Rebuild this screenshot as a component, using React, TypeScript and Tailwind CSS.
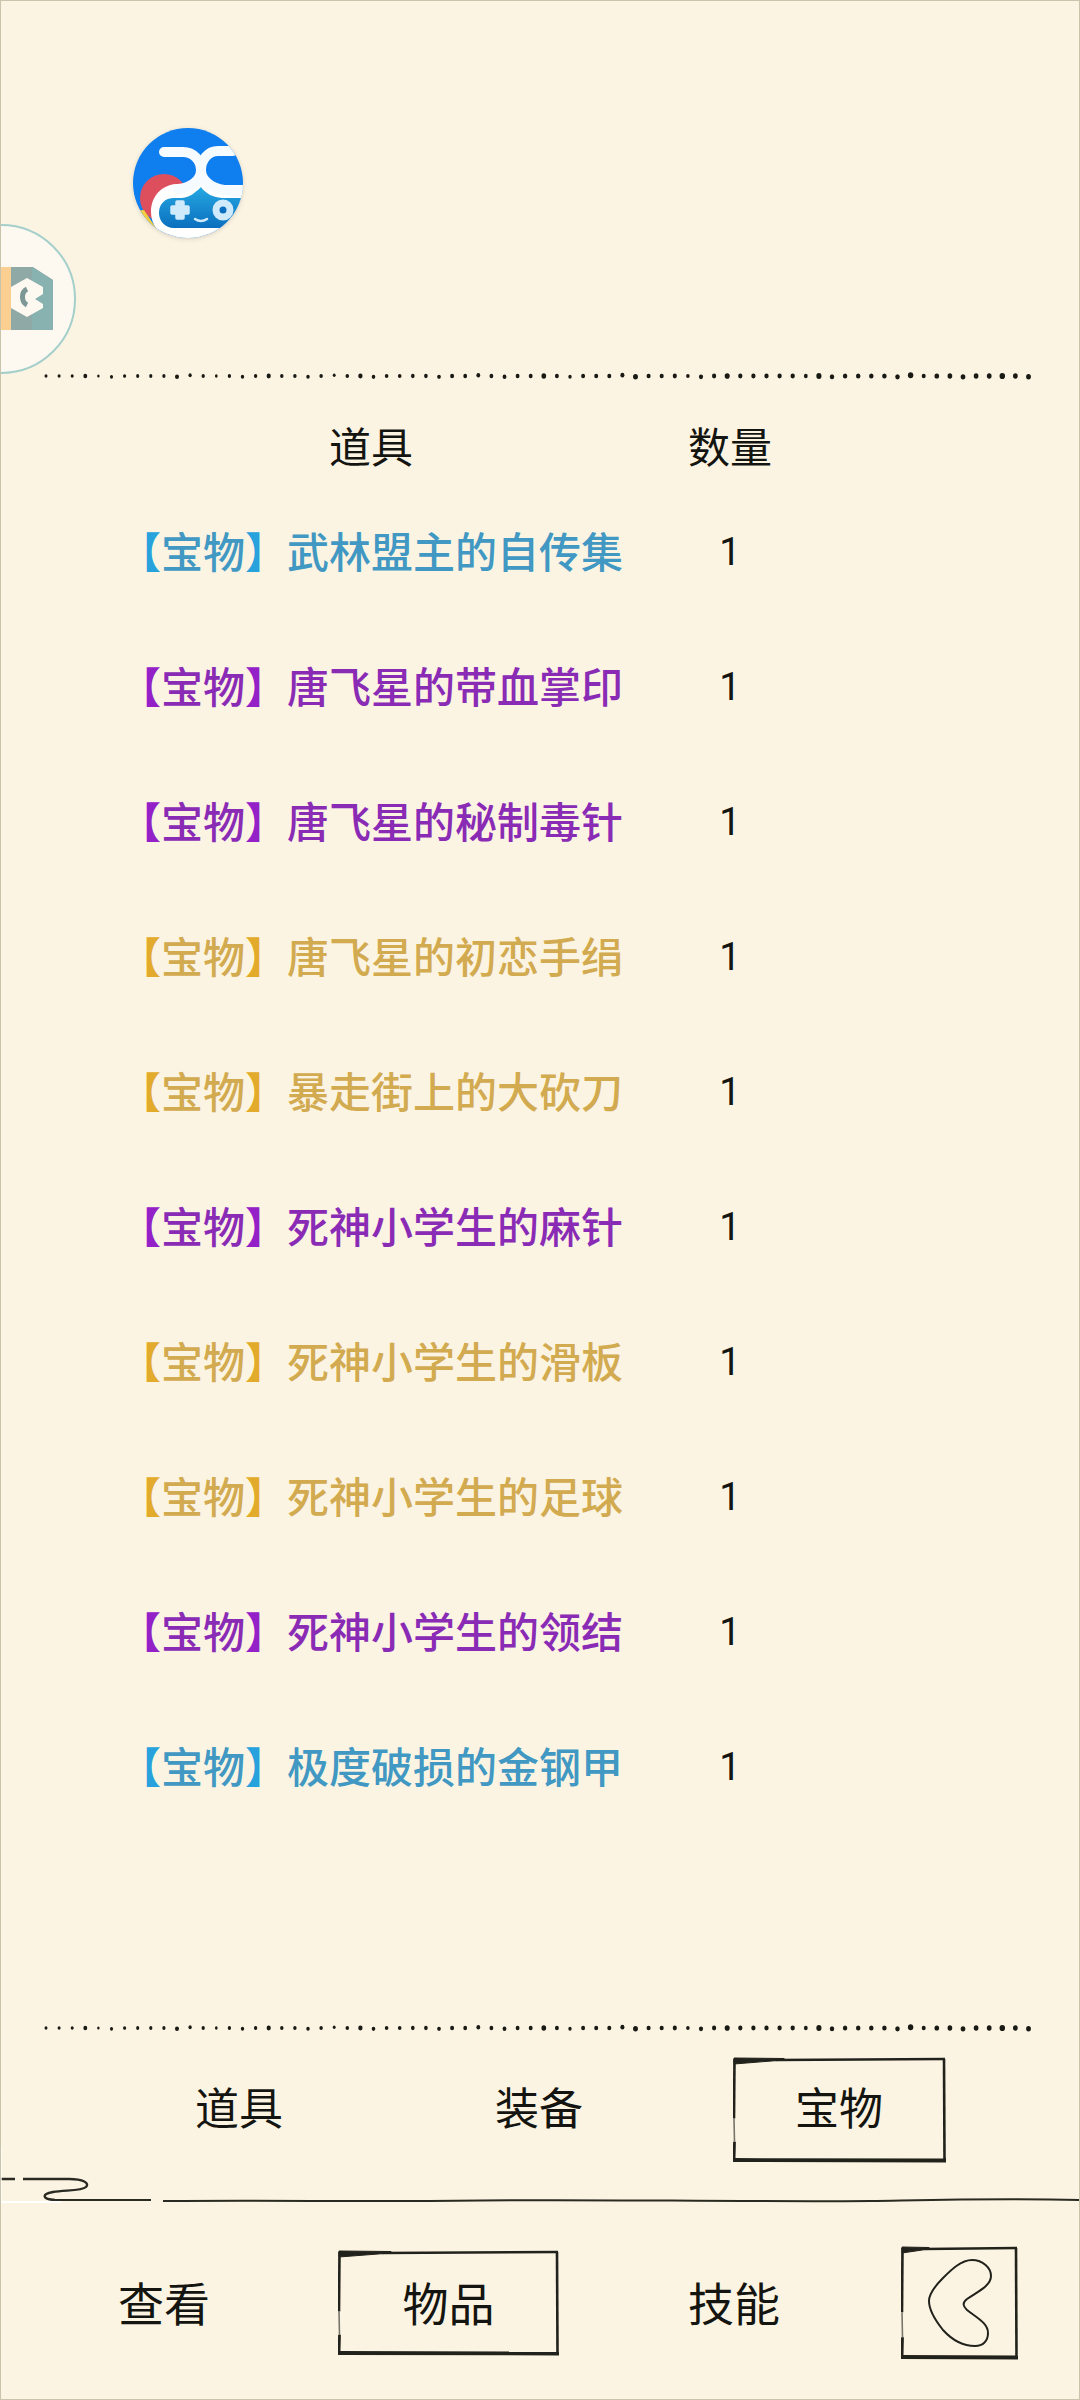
const FONT = "font-['Noto_Sans_CJK_SC','Noto_Sans_CJK_JP',sans-serif]";

const BLUE = { text: "text-[#4198c2]", bracket: "text-[#27a2dc]" };
const PURPLE = { text: "text-[#8a2bb5]", bracket: "text-[#9420c8]" };
const GOLD = { text: "text-[#d2aa50]", bracket: "text-[#e3ab2b]" };

const ITEMS = [
  { name: "武林盟主的自传集", tone: BLUE },
  { name: "唐飞星的带血掌印", tone: PURPLE },
  { name: "唐飞星的秘制毒针", tone: PURPLE },
  { name: "唐飞星的初恋手绢", tone: GOLD },
  { name: "暴走街上的大砍刀", tone: GOLD },
  { name: "死神小学生的麻针", tone: PURPLE },
  { name: "死神小学生的滑板", tone: GOLD },
  { name: "死神小学生的足球", tone: GOLD },
  { name: "死神小学生的领结", tone: PURPLE },
  { name: "极度破损的金钢甲", tone: BLUE },
];

function Dots() {
  const dots = Array.from({ length: 76 }, (_, i) => {
    const x = 3 + i * 13.1;
    const t = i / 75;
    const r = 1.5 + (i % 7 === 3 ? 0.4 : 0) - (i % 9 === 4 ? 0.3 : 0) + t * 0.9;
    const y = 5 + ((i * 7) % 5 === 0 ? 0.8 : 0) - (i % 11 === 0 ? 0.8 : 0);
    return { x, y, r };
  });
  return (
    <svg width="996" height="10" viewBox="0 0 996 10" className="ml-[42px] block">
      {dots.map((d) => (
        <ellipse key={d.x} cx={d.x} cy={d.y} rx={d.r} ry={d.r + 0.3} fill="#1a1a14" />
      ))}
    </svg>
  );
}

function SketchBox({ w, h, children }: { w: number; h: number; children: React.ReactNode }) {
  return (
    <div className="relative flex items-center justify-center" style={{ width: w, height: h }}>
      <svg width={w} height={h} viewBox={`0 0 ${w} ${h}`} className="absolute inset-0" fill="none" stroke="#22221c">
        <path d={`M1 1 L${w * 0.24} 1.5 L${w * 0.24} 3 L1 7 Z`} fill="#22221c" strokeWidth="1" />
        <path d={`M${w * 0.2} 3 L${w - 1} 2`} strokeWidth="2.4" />
        <path d={`M${w - 2} 2 L${w - 1.5} ${h - 3}`} strokeWidth="2.6" />
        <path d={`M0 ${h - 3} L${w} ${h - 2.5}`} strokeWidth="3.8" />
        <path d={`M1.5 2 L1 ${h * 0.58}`} strokeWidth="2.6" />
        <path d={`M1 ${h * 0.58} L1.5 ${h * 0.8}`} strokeWidth="1.6" stroke="#77756a" />
        <path d={`M1.5 ${h * 0.8} L1 ${h - 2}`} strokeWidth="2.8" />
      </svg>
      {children}
    </div>
  );
}

function Logo() {
  return (
    <svg width="112" height="112" viewBox="0 0 112 112" className="absolute left-[131px] top-[126px] drop-shadow-sm">
      <defs>
        <clipPath id="lg">
          <circle cx="56" cy="56" r="55" />
        </clipPath>
        <linearGradient id="pad" x1="0" y1="0" x2="0" y2="1">
          <stop offset="0" stopColor="#26a8e2" />
          <stop offset="1" stopColor="#0a6fbe" />
        </linearGradient>
      </defs>
      <g clipPath="url(#lg)">
        <rect width="112" height="112" fill="#0f7eee" />
        <circle cx="32" cy="71" r="24" fill="#de4f5e" />
        <path d="M0 84 L12 83 L30 110 L8 110 Z" fill="#f3cf3f" />
        <path d="M19 85 C19 68 31 58 44 57 H60 L69 50 L78 58 H112 V112 H46 C30 112 19 100 19 85 Z" fill="#ffffff" />
        <path d="M50 71 C58 70 63 66 69 60 C73 66 80 70 90 71 H120 V101 H42 C33 101 27 94 27 86 C27 77 33 71 42 71 Z" fill="url(#pad)" />
        <path d="M32 25 H51 C62 25 69 34 69 43 C69 54 58 61 46 62" fill="none" stroke="#f6fbff" strokeWidth="10" strokeLinecap="round" />
        <path d="M101 24 H86 C76 24 69 33 69 43 C69 54 80 61 92 63 L112 66" fill="none" stroke="#f6fbff" strokeWidth="10" strokeLinecap="round" />
        <path d="M45 75 h6 v5 h5 v6 h-5 v5 h-6 v-5 h-5 v-6 h5 Z" fill="#cfeafb" stroke="#cfeafb" strokeWidth="3.5" strokeLinejoin="round" />
        <path d="M63 92 Q69 96 75 92" fill="none" stroke="#cfeafb" strokeWidth="2.5" strokeLinecap="round" />
        <circle cx="91" cy="83" r="7" fill="#0a6fbe" stroke="#cfeafb" strokeWidth="7" />
      </g>
    </svg>
  );
}

function Ball() {
  return (
    <svg width="76" height="152" viewBox="0 0 76 152" className="absolute left-0 top-[223px]">
      <circle cx="0" cy="75" r="74" fill="#fdf9f1" stroke="#a5cfca" strokeWidth="2" />
      <rect x="0" y="43" width="10" height="63" fill="#fbcf92" />
      <path d="M10 43 H32 L52 56 V106 H10 Z" fill="#8fa9a7" />
      <path d="M31 43 L52 56 V106 H31 Z" fill="#88b2b0" />
      <path d="M26 54 L42 63 V70 L34 75 L42 80 V84 L26 93 L10 84 V63 Z" fill="#fdf9f1" />
      <path d="M26 65 C20 68 20 78 26 81" fill="none" stroke="#7d9896" strokeWidth="5" />
    </svg>
  );
}

export default function App() {
  return (
    <div className={`relative h-[2400px] w-[1080px] overflow-hidden border border-[#c9c3ac] bg-[#fcf4e3] text-[#141410] ${FONT}`}>
      <Logo />
      <Ball />
      <div className="absolute -left-px top-[2146px] h-[56px] w-[2px] bg-white/70" />

      <div className="flex h-[2176px] flex-col pt-[370px]">
        <Dots />
        <div className="ml-[118px] grid h-[102px] grid-cols-[504px_214px] items-center pt-[26px] text-[42px] leading-none">
          <div className="text-center">道具</div>
          <div className="text-center">数量</div>
        </div>
        <ul className="flex h-[1542px] flex-col">
          {ITEMS.map((item) => (
            <li key={item.name} className="ml-[118px] grid h-[135px] shrink-0 grid-cols-[504px_214px] items-center">
              <div className={`whitespace-nowrap pb-[2px] text-[42px] font-medium leading-none ${item.tone.text}`}>
                <span className={`font-bold ${item.tone.bracket}`}>【</span>宝物<span className={`font-bold ${item.tone.bracket}`}>】</span>{item.name}
              </div>
              <div className="pt-[2px] text-center font-['Roboto',sans-serif] text-[38px] leading-none">1</div>
            </li>
          ))}
        </ul>
        <div className="-mt-[2px]">
          <Dots />
        </div>
        <div className="ml-[88px] mt-[24px] grid w-[900px] grid-cols-3 items-center text-[44px] leading-none">
          <div className="pb-[8px] text-center">道具</div>
          <div className="pb-[8px] text-center">装备</div>
          <div className="flex justify-center">
            <SketchBox w={213} h={106}>
              <span className="pb-[8px]">宝物</span>
            </SketchBox>
          </div>
        </div>
      </div>

      <svg width="1080" height="26" viewBox="0 0 1080 26" className="block" fill="none" stroke="#2a2a22">
        <path d="M0 2 H14 M22 2 H68 C82 2 89 6 85 10 C81 14 64 13 52 15 C41 17 40 22 54 23" strokeWidth="2.4" />
        <path d="M54 23 H150 M162 24 C300 23 340 25 480 23.5 C600 22 720 25 870 24 C930 23 1000 21 1080 23" strokeWidth="2" />
        <path d="M0 25.5 H60" stroke="#ffffff" strokeWidth="3" />
      </svg>

      <nav className="flex h-[196px] items-center pl-[57px] pt-[4px] text-[46px] leading-none">
        <div className="w-[212px] pb-[4px] text-center">查看</div>
        <div className="ml-[68px]">
          <SketchBox w={221} h={106}>
            <span className="pb-[4px]">物品</span>
          </SketchBox>
        </div>
        <div className="ml-[65px] w-[220px] pb-[4px] text-center">技能</div>
        <div className="ml-[57px]">
          <SketchBox w={117} h={114}>
            <svg width="64" height="88" viewBox="-1 -1 64 88" fill="none" stroke="#22221c" strokeWidth="2">
              <path d="M14 18 C22 10 32 0 43 0 C54 0 62 8 62 16 C62 26 48 32 38 39 C33 43 34 46 38 50 C48 58 59 63 59 73 C59 81 54 86 46 86 C36 86 24 81 14 70 C6 60 0 50 0 41 C0 33 8 24 14 18 Z" />
            </svg>
          </SketchBox>
        </div>
      </nav>
    </div>
  );
}
